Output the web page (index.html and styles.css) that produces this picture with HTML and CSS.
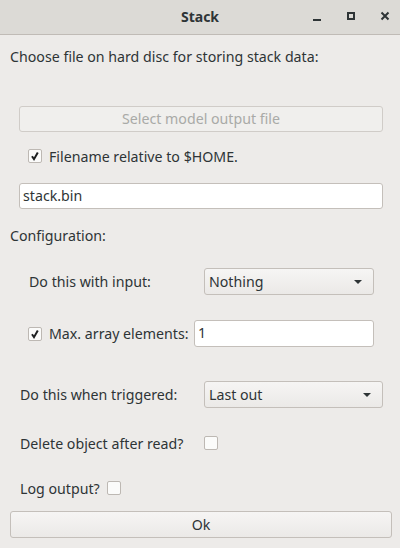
FILE: index.html
```html
<!DOCTYPE html>
<html>
<head>
<meta charset="utf-8">
<link rel="stylesheet" href="styles.css">
</head>
<body>
<div class="window">
  <div class="titlebar">
    <span class="title">Stack</span>
    <div class="controls">
      <svg class="ctl" width="14" height="14" viewBox="0 0 14 14"><rect x="3" y="10" width="8" height="2" fill="#2e3436"/></svg>
      <svg class="ctl" width="14" height="14" viewBox="0 0 14 14"><rect x="4" y="4" width="6" height="6" fill="none" stroke="#2e3436" stroke-width="2"/></svg>
      <svg class="ctl" width="14" height="14" viewBox="0 0 14 14"><path d="M3.5 3.5 L10.5 10.5 M10.5 3.5 L3.5 10.5" stroke="#2e3436" stroke-width="2"/></svg>
    </div>
  </div>
  <div class="content">
    <div class="heading">Choose file on hard disc for storing stack data:</div>
    <div class="filebox">
      <div class="button disabled">Select model output file</div>
      <div class="check-row indent"><span class="check on"><svg width="12" height="12" viewBox="0 0 12 12"><path d="M3 6.2 L5 9.2 L8.8 2.6" fill="none" stroke="#1d1f20" stroke-width="2"/></svg></span><span>Filename relative to $HOME.</span></div>
      <div class="entry">stack.bin</div>
    </div>
    <div class="heading conf">Configuration:</div>
    <div class="conf-box">
      <div class="row">
        <span class="lbl lbl-in">Do this with input:</span>
        <div class="combo grow">Nothing<span class="arrow"></span></div>
      </div>
      <div class="row row2">
        <div class="check-row max"><span class="check on"><svg width="12" height="12" viewBox="0 0 12 12"><path d="M3 6.2 L5 9.2 L8.8 2.6" fill="none" stroke="#1d1f20" stroke-width="2"/></svg></span><span>Max. array elements:</span></div>
        <div class="entry small">1</div>
      </div>
    </div>
    <div class="row row3">
      <span class="lbl lbl-trig">Do this when triggered:</span>
      <div class="combo grow">Last out<span class="arrow"></span></div>
    </div>
    <div class="row row4">
      <span class="lbl lbl-del">Delete object after read?</span>
      <span class="check off"></span>
    </div>
    <div class="row row5">
      <span class="lbl lbl-log">Log output?</span>
      <span class="check off"></span>
    </div>
    <div class="button ok">Ok</div>
  </div>
</div>
</body>
</html>
```
FILE: styles.css
```css
html, body {
  margin: 0;
  padding: 0;
}
body {
  width: 400px;
  height: 548px;
  background: #edebe9;
  font-family: "Noto Sans", "DejaVu Sans", sans-serif;
  font-size: 14.2px;
  color: #2e3436;
  overflow: hidden;
}
* { box-sizing: border-box; }
.titlebar {
  height: 35px;
  padding-bottom: 2px;
  background: #dcdad6;
  border-bottom: 1px solid #c0bbb6;
  position: relative;
  display: flex;
  align-items: center;
  justify-content: center;
}
.title {
  font-weight: bold;
  font-size: 14px;
  color: #2e3436;
}
.controls {
  position: absolute;
  right: 8px;
  top: 9px;
  display: flex;
  gap: 20px;
}
.ctl { display: block; }
.content {
  padding: 0 8px 0 10px;
}
.heading {
  margin-top: 12px;
  height: 20px;
  line-height: 20px;
}
.filebox {
  padding: 39px 9px 0 9px;
}
.button {
  height: 26px;
  line-height: 24px;
  border: 1px solid #c4bfba;
  border-radius: 3px;
  background: linear-gradient(#f6f5f4, #ebe9e7);
  text-align: center;
}
.button.disabled {
  color: #a9aaa7;
  background: #f0efed;
  border-color: #d0ccc8;
}
.check-row {
  display: flex;
  align-items: center;
  height: 20px;
}
.indent {
  margin: 14px 0 0 9px;
}
.check {
  display: inline-block;
  flex: none;
  width: 14px;
  height: 14px;
  border: 1px solid #bdb8b3;
  border-radius: 2px;
  background: #fbfbfa;
}
.check svg { display: block; }
.check-row .check { margin-right: 7px; }
.entry {
  margin-top: 17px;
  height: 26px;
  line-height: 24px;
  border: 1px solid #c4bfba;
  border-radius: 3px;
  background: #ffffff;
  padding-left: 3px;
}
.conf {
  margin-top: 17px;
}
.conf-box {
  padding: 22px 18px 0 19px;
}
.row {
  display: flex;
  align-items: center;
}
.lbl-in { width: 175px; flex: none; }
.grow { flex: 1; }
.row2 {
  margin-top: 25px;
}
.max { width: 166px; flex: none; margin-left: -1px; }
.entry.small {
  margin-top: 0;
  flex: 1;
  height: 27px;
}
.combo {
  height: 27px;
  line-height: 25px;
  border: 1px solid #c4bfba;
  border-radius: 3px;
  background: linear-gradient(#f6f5f4, #ebe9e7);
  padding-left: 4px;
  position: relative;
}
.arrow {
  position: absolute;
  right: 11px;
  top: 11px;
  width: 0;
  height: 0;
  border-left: 4px solid transparent;
  border-right: 4px solid transparent;
  border-top: 4px solid #2e3436;
}
.row3 {
  margin-top: 34px;
  padding: 0 9px 0 10px;
}
.lbl-trig { width: 184px; flex: none; }
.row4 {
  margin-top: 25px;
  padding-left: 10px;
  height: 20px;
}
.lbl-del { width: 184px; flex: none; }
.row5 {
  margin-top: 25px;
  padding-left: 10px;
  height: 20px;
}
.lbl-log { margin-right: 7px; }
.ok {
  margin-top: 13px;
  height: 27px;
  line-height: 25px;
  width: 382px;
}
```
